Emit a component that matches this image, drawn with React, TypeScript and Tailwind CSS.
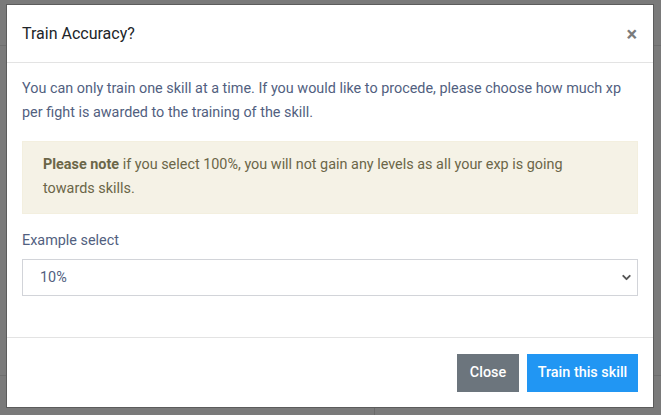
import { ChevronDown } from "lucide-react"

export default function App() {
  return (
    <div
      className="relative h-[415px] w-[661px] overflow-hidden bg-[#7a7a7a] pl-[6px] pt-[4px]"
      style={{ fontFamily: "Roboto, 'Liberation Sans', sans-serif" }}
    >
      {/* faint page behind the backdrop */}
      <div className="absolute left-0 top-[45px] h-px w-full bg-[#6e6e6e]" />
      <div className="absolute left-0 top-[375px] h-px w-full bg-[#6e6e6e]" />
      <div className="absolute left-[374px] top-[375px] h-[40px] w-px bg-[#6a6a6a]" />

      <div className="relative flex h-[404px] w-[648px] flex-col border border-[#5c5c5c] bg-white">
        {/* Header */}
        <div className="flex h-[58px] shrink-0 items-center justify-between border-b border-[#e3e3e3] pl-[15px] pr-[16px]">
          <h5 className="text-[16px] leading-6 text-[#212529]">Train Accuracy?</h5>
          <button className="text-[20px] font-bold leading-none text-[#7b7b7b]">×</button>
        </div>

        {/* Body */}
        <div className="flex-1 px-[15px] pt-[14px] text-[14.4px] leading-6 text-[#525f7f]">
          <p>
            You can only train one skill at a time. If you would like to procede, please choose how much xp per
            fight is awarded to the training of the skill.
          </p>
          <div className="mt-[16px] border border-[#f3efdf] bg-[#f5f2e6] px-[20px] pb-[12px] pt-[11px] text-[#6b6648]">
            <span className="font-bold">Please note</span> if you select 100%, you will not gain any levels as all
            your exp is going
            <br />
            towards skills.
          </div>
          <div className="mt-[15px]">
            <label className="block leading-6">Example select</label>
            <div className="mt-[6px] flex h-[37px] items-center justify-between border border-[#d2d4d9] pl-[17px] pr-[4px]">
              <span>10%</span>
              <ChevronDown className="h-[13px] w-[13px] text-[#555]" strokeWidth={3.5} />
            </div>
          </div>
        </div>

        {/* Footer */}
        <div className="flex shrink-0 justify-end gap-[8px] border-t border-[#e3e3e3] px-[15px] pb-[15px] pt-[16px]">
          <button className="h-[38px] w-[62px] bg-[#6c757d] text-center text-[14.4px] font-medium text-white">
            Close
          </button>
          <button className="h-[38px] w-[111px] bg-[#2196f3] text-center text-[14.4px] font-medium text-white">
            Train this skill
          </button>
        </div>
      </div>
    </div>
  )
}
